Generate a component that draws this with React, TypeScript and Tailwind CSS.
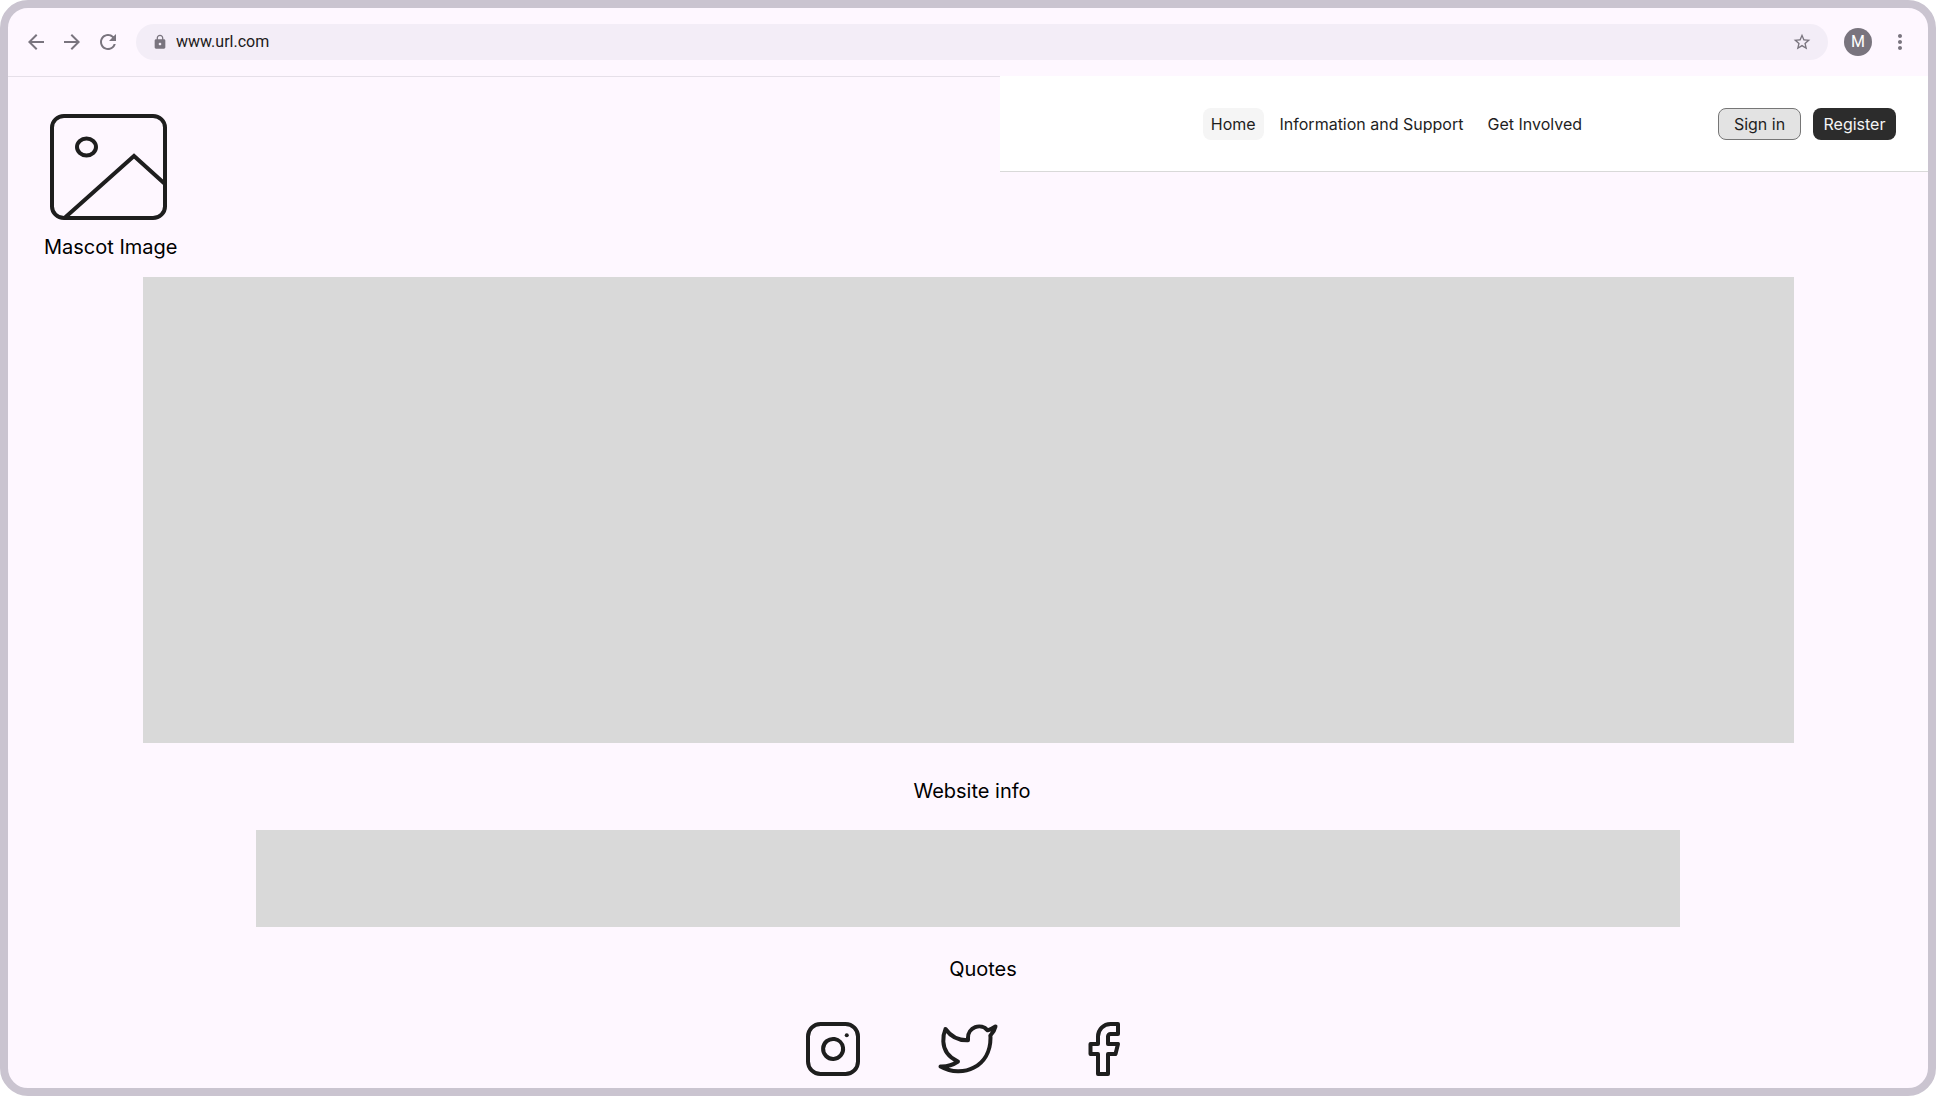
import React from "react";
import {
  MdArrowBack,
  MdArrowForward,
  MdLock,
  MdMoreVert,
  MdRefresh,
  MdStarBorder,
} from "react-icons/md";

function BrowserBar() {
  return (
    <div className="flex h-[69px] items-center gap-4 border-b border-[#e6e0e9] px-4 text-[#79747e]">
      <div className="flex items-center gap-3">
        <button type="button" aria-label="Back">
          <MdArrowBack size={24} />
        </button>
        <button type="button" aria-label="Forward">
          <MdArrowForward size={24} />
        </button>
        <button type="button" aria-label="Reload">
          <MdRefresh size={24} />
        </button>
      </div>
      <div className="flex h-9 flex-1 items-center gap-2 rounded-full bg-[#f3edf7] px-4">
        <MdLock size={16} />
        <input
          type="text"
          aria-label="Address"
          defaultValue="www.url.com"
          className="h-6 min-w-0 flex-1 bg-transparent font-[Roboto,sans-serif] text-base text-[#1d1b20] outline-none"
        />
        <button type="button" aria-label="Bookmark this page">
          <MdStarBorder size={20} />
        </button>
      </div>
      <button
        type="button"
        aria-label="Profile"
        className="flex size-7 items-center justify-center rounded-full bg-[#79747e] font-[Roboto,sans-serif] text-base text-white"
      >
        M
      </button>
      <button type="button" aria-label="Menu">
        <MdMoreVert size={24} />
      </button>
    </div>
  );
}

function SiteHeader() {
  return (
    <header className="relative -mt-px flex h-24 items-center justify-end gap-32 self-start border-b border-[#d9d9d9] bg-white px-8 text-base leading-4 text-[#1e1e1e]">
      <nav className="flex items-center gap-2">
        <a href="#home" className="rounded-lg bg-[#f5f5f5] p-2">
          Home
        </a>
        <a href="#support" className="rounded-lg p-2">
          Information and Support
        </a>
        <a href="#involved" className="rounded-lg p-2">
          Get Involved
        </a>
      </nav>
      <div className="flex items-center gap-3">
        <button
          type="button"
          className="h-8 w-[83px] rounded-lg border border-[#767676] bg-[#e3e3e3]"
        >
          Sign in
        </button>
        <button type="button" className="h-8 w-[83px] rounded-lg bg-[#2c2c2c] text-[#f5f5f5]">
          Register
        </button>
      </div>
    </header>
  );
}

function MascotImage() {
  return (
    <figure className="pt-[37px] pb-[18px] pl-9">
      <svg
        width="117"
        height="106"
        viewBox="0 0 117 106"
        fill="none"
        stroke="#1e1e1e"
        strokeWidth="4"
        className="ml-1.5"
        aria-hidden="true"
      >
        <rect x="2" y="2" width="113" height="102" rx="12" ry="11.5" />
        <ellipse cx="36.5" cy="33" rx="9.5" ry="8.5" />
        <path d="M115 70 84 42 14.5 104" />
      </svg>
      <figcaption className="mt-[15px]">Mascot Image</figcaption>
    </figure>
  );
}

function SocialLink({ label, children }: { label: string; children: React.ReactNode }) {
  return (
    <a href="#social" aria-label={label}>
      <svg
        viewBox="0 0 24 24"
        fill="none"
        stroke="#1e1e1e"
        strokeWidth="1.6"
        strokeLinecap="round"
        strokeLinejoin="round"
        className="size-[60px]"
        aria-hidden="true"
      >
        {children}
      </svg>
    </a>
  );
}

export default function App() {
  return (
    <div className="flex min-h-screen flex-col rounded-[28px] border-8 border-[#cac4d0] bg-[#fef7ff] font-[Inter,sans-serif] text-xl leading-6 text-black">
      <BrowserBar />
      <div className="grid grid-cols-[992fr_928fr]">
        <MascotImage />
        <SiteHeader />
      </div>
      <main>
        <section aria-label="Banner" className="mr-[134px] ml-[135px] h-[466px] bg-[#d9d9d9]" />
        <h2 className="mt-9 pl-2 text-center">Website info</h2>
        <section aria-label="Website info" className="mx-[248px] mt-[27px] h-[97px] bg-[#d9d9d9]" />
        <h2 className="mt-[30px] pl-[30px] text-center">Quotes</h2>
      </main>
      <footer className="mt-[38px] flex justify-center gap-[75px]">
        <SocialLink label="Instagram">
          <rect x="2" y="2" width="20" height="20" rx="5" />
          <path d="M16 11.37A4 4 0 1 1 12.63 8 4 4 0 0 1 16 11.37z" />
          <path d="M17.5 6.5h.01" />
        </SocialLink>
        <SocialLink label="Twitter">
          <path d="M23 3a10.9 10.9 0 0 1-3.14 1.53 4.48 4.48 0 0 0-7.86 3v1A10.66 10.66 0 0 1 3 4s-4 9 5 13a11.64 11.64 0 0 1-7 2c9 5 20 0 20-11.5a4.5 4.5 0 0 0-.08-.83A7.72 7.72 0 0 0 23 3z" />
        </SocialLink>
        <SocialLink label="Facebook">
          <path d="M18 2h-3a5 5 0 0 0-5 5v3H7v4h3v8h4v-8h3l1-4h-4V7a1 1 0 0 1 1-1h3z" />
        </SocialLink>
      </footer>
    </div>
  );
}
